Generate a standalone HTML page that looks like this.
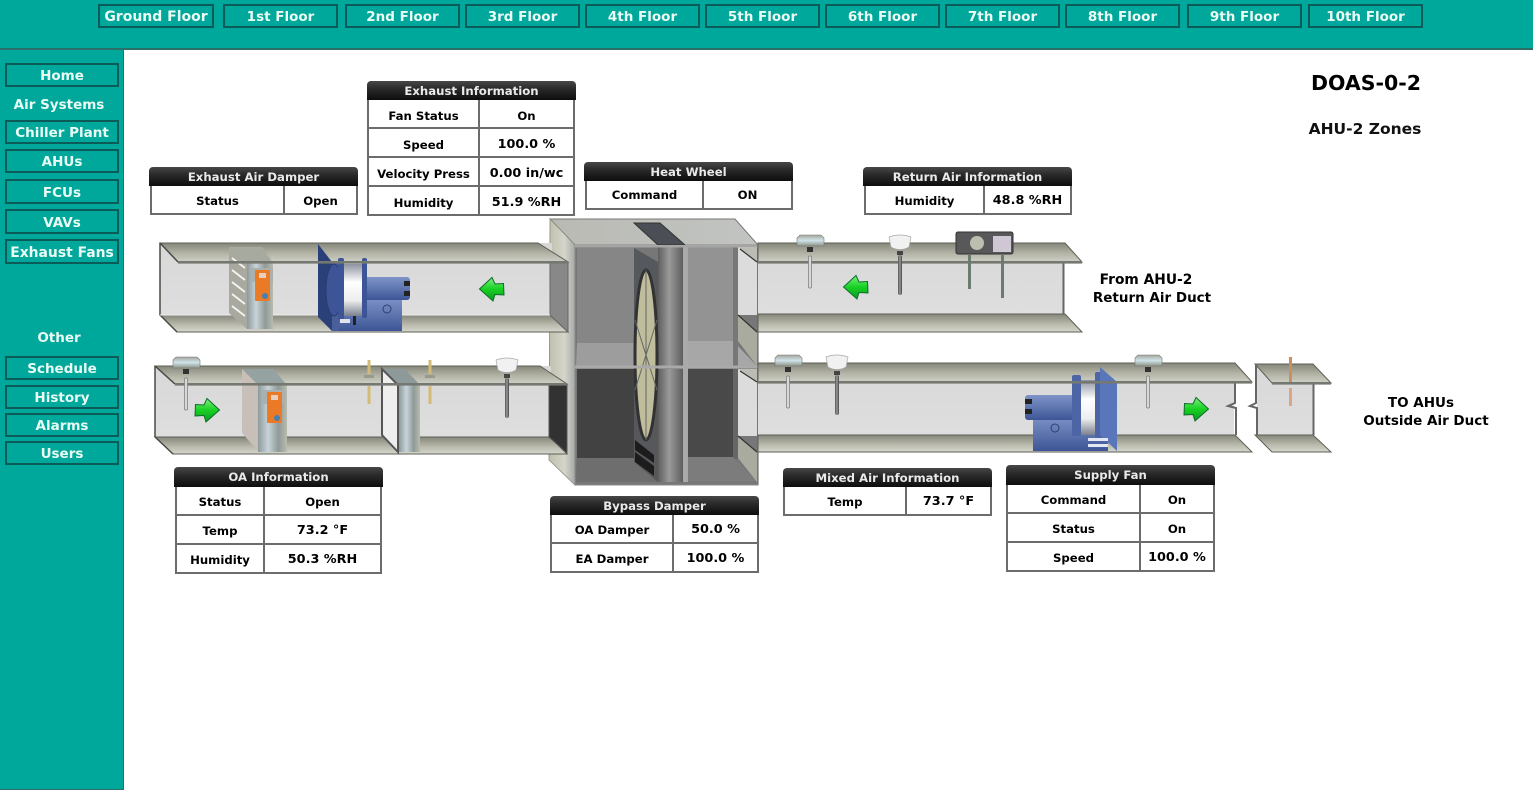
<!DOCTYPE html>
<html lang="en"><head><meta charset="utf-8"><title>DOAS-0-2</title>
<style>
html,body{margin:0;padding:0;background:#fff;width:1533px;height:791px;overflow:hidden}
body{position:relative;font-family:"DejaVu Sans",Verdana,sans-serif;font-weight:bold;color:#000}
#top{position:absolute;left:0;top:0;width:1533px;height:48px;background:#00a89b;border-bottom:2px solid #2c6f69}
#side{position:absolute;left:0;top:50px;width:123px;height:739px;background:#00a89b;border-right:1px solid #2c6f69;border-bottom:1px solid #2c6f69}
.b{position:absolute;box-sizing:border-box;border:2px solid #0b5c58;color:#eafbf4;display:flex;align-items:center;justify-content:center;font-size:13.5px;height:24px;padding-top:2px;white-space:nowrap;filter:blur(.25px)}
.s{left:5px;width:114px}
.l{position:absolute;color:#eafbf4;font-size:13.5px;white-space:nowrap;text-align:center;filter:blur(.25px)}
.t{position:absolute;width:209px;font-size:11.7px}
.t .h{height:19px;background:linear-gradient(#474747,#2a2a2a 40%,#0d0d0d);border-radius:4px 4px 0 0;color:#e9e9e9;text-align:center;line-height:20px;font-size:11.7px;white-space:nowrap}
.t .r{box-sizing:border-box;display:flex;height:29px;border:solid #6c6c6c;border-width:0 2px 2px 2px;background:#fff}
.t .r div{display:flex;align-items:center;justify-content:center;white-space:nowrap;padding-top:2px;box-sizing:border-box;filter:blur(.2px)}
.t .r div:first-child{border-right:2px solid #6c6c6c}
.t .r div:last-child{flex:1}
.t .r .n{font-size:12.8px}
.t.a .r{margin-left:1px}
.t.e .r{margin-right:1px}
.t.e .r div{padding-top:4px}
.t.e .r div:first-child{}
.t.o .r{margin:0 1px 0 1px}
.t.u .r div{padding-top:0}
.x{position:absolute;color:#000;white-space:nowrap;text-align:center;filter:blur(.2px)}
svg{position:absolute;left:0;top:0}
</style></head><body>
<div id="top"></div><div id="side"></div>
<div class="b" style="left:98px;top:4px;width:116px;font-size:14px">Ground Floor</div>
<div class="b" style="left:223px;top:4px;width:115px">1st Floor</div>
<div class="b" style="left:345px;top:4px;width:115px">2nd Floor</div>
<div class="b" style="left:465px;top:4px;width:115px">3rd Floor</div>
<div class="b" style="left:585px;top:4px;width:115px">4th Floor</div>
<div class="b" style="left:705px;top:4px;width:115px">5th Floor</div>
<div class="b" style="left:825px;top:4px;width:115px">6th Floor</div>
<div class="b" style="left:945px;top:4px;width:115px">7th Floor</div>
<div class="b" style="left:1065px;top:4px;width:115px">8th Floor</div>
<div class="b" style="left:1187px;top:4px;width:115px">9th Floor</div>
<div class="b" style="left:1308px;top:4px;width:115px">10th Floor</div>

<div class="b s" style="top:63px">Home</div>
<div class="l" style="left:0;width:118px;top:97px">Air Systems</div>
<div class="b s" style="top:120px">Chiller Plant</div>
<div class="b s" style="top:149px">AHUs</div>
<div class="b s" style="top:179px;height:25px">FCUs</div>
<div class="b s" style="top:209px;height:25px">VAVs</div>
<div class="b s" style="top:239px;height:25px;font-size:13.9px">Exhaust Fans</div>
<div class="l" style="left:0;width:118px;top:330px">Other</div>
<div class="b s" style="top:356px">Schedule</div>
<div class="b s" style="top:385px">History</div>
<div class="b s" style="top:413px">Alarms</div>
<div class="b s" style="top:441px">Users</div>

<svg width="1533" height="791" viewBox="0 0 1533 791">
<defs>
<linearGradient id="band" x1="0" y1="0" x2="0" y2="1"><stop offset="0" stop-color="#85877a"/><stop offset=".55" stop-color="#b3b4a6"/><stop offset="1" stop-color="#cfd0c6"/></linearGradient>
<linearGradient id="bandb" x1="0" y1="0" x2="0" y2="1"><stop offset="0" stop-color="#85877a"/><stop offset=".6" stop-color="#bbbcae"/><stop offset="1" stop-color="#d5d6cd"/></linearGradient>
<linearGradient id="body" x1="0" y1="0" x2="0" y2="1"><stop offset="0" stop-color="#d8d8d8"/><stop offset="1" stop-color="#dedede"/></linearGradient>
<linearGradient id="grn" x1="0" y1="0" x2="0" y2="1"><stop offset="0" stop-color="#7df07a"/><stop offset=".5" stop-color="#16d024"/><stop offset="1" stop-color="#0a9a20"/></linearGradient>
<linearGradient id="metal" x1="0" y1="0" x2="1" y2="0"><stop offset="0" stop-color="#8d9a9c"/><stop offset=".35" stop-color="#c8d4d8"/><stop offset=".7" stop-color="#8f9a98"/><stop offset="1" stop-color="#b8bcae"/></linearGradient>
<linearGradient id="sideg" x1="0" y1="0" x2="1" y2="0"><stop offset="0" stop-color="#bfc0ac"/><stop offset=".6" stop-color="#d5d5cb"/><stop offset="1" stop-color="#a5a8a6"/></linearGradient>
<linearGradient id="roof" x1="0" y1="0" x2="1" y2="0"><stop offset="0" stop-color="#b9bab3"/><stop offset="1" stop-color="#c2c4c2"/></linearGradient>
<linearGradient id="blue" x1="0" y1="0" x2="0" y2="1"><stop offset="0" stop-color="#7e93c8"/><stop offset=".5" stop-color="#5f76b0"/><stop offset="1" stop-color="#3d5596"/></linearGradient>
<linearGradient id="drum" x1="0" y1="0" x2="0" y2="1"><stop offset="0" stop-color="#8d93a0"/><stop offset=".35" stop-color="#fff"/><stop offset=".7" stop-color="#eee"/><stop offset="1" stop-color="#7a8090"/></linearGradient>
<linearGradient id="col" x1="0" y1="0" x2="1" y2="0"><stop offset="0" stop-color="#5e5e5e"/><stop offset=".45" stop-color="#9a9a9a"/><stop offset="1" stop-color="#5e5e5e"/></linearGradient>
<linearGradient id="rod" x1="0" y1="0" x2="1" y2="0"><stop offset="0" stop-color="#555"/><stop offset=".5" stop-color="#999"/><stop offset="1" stop-color="#444"/></linearGradient>
<linearGradient id="boxs" x1="0" y1="0" x2="0" y2="1"><stop offset="0" stop-color="#a5a69c"/><stop offset=".5" stop-color="#cfe4ea"/><stop offset="1" stop-color="#8e9488"/></linearGradient>
<filter id="sf" x="-2%" y="-2%" width="104%" height="104%"><feGaussianBlur stdDeviation=".35"/></filter>
<g id="arrowL"><path d="M0.5 12L13 .5L16 7L24.5 6.5L25 18L16 17.5L14 24Z" fill="url(#grn)" stroke="#0b6d2a" stroke-width="1"/></g>
<g id="arrowR"><path d="M24.5 12L12 .5L9 7L.5 6.5L0 18L9 17.5L11 24Z" fill="url(#grn)" stroke="#0b6d2a" stroke-width="1"/></g>
<g id="sa"><path d="M0 3L3 0L24 0L27 3L27 11L0 11Z" fill="url(#boxs)" stroke="#777" stroke-width=".6"/><rect x="10" y="12" width="6" height="5" fill="#333"/><rect x="11.5" y="21" width="3" height="32" rx="1" fill="#d8d8d8" stroke="#777" stroke-width=".7"/></g>
<g id="sb"><path d="M0 2Q11 -2 22 2L20 12Q11 17 2 12Z" fill="#f1f1f1" stroke="#aaa" stroke-width=".7"/><rect x="8" y="16" width="6" height="4" fill="#444"/><rect x="9" y="20" width="4" height="40" rx="2" fill="url(#rod)"/></g>
<g id="tan"><rect x="-1.5" y="0" width="3" height="14" fill="#d4bb74"/><rect x="-5" y="15" width="10" height="3" fill="#9a9a8c"/><rect x="-1.5" y="26" width="3" height="18" fill="#d4bb74"/></g>
<g id="act"><rect x="-4" y="-2" width="22" height="14" fill="#aab0ad"/><rect x="0" y="0" width="15" height="31" rx="1" fill="#ea7a26"/><rect x="4" y="3" width="7" height="5" fill="#e8d0c0"/><circle cx="10" cy="26" r="3" fill="#4a7fb0"/></g>
</defs>

<g filter="url(#sf)">
<path d="M550 219H735L758 245H575Z" fill="url(#roof)" stroke="#777" stroke-width="1"/>
<path d="M550 219L575 245V485L549 460Z" fill="url(#sideg)" stroke="#8a8a80" stroke-width=".8"/>
<rect x="575" y="245" width="183" height="240" fill="#777" stroke="#888"/>
<rect x="577" y="248" width="57" height="96" fill="#868686"/>
<path d="M577 343H634L657 366H576Z" fill="#9d9d9d"/>
<rect x="687" y="247" width="46" height="96" fill="#939393"/>
<path d="M687 341H733L757 366H687Z" fill="#a7a7a7"/>
<rect x="733" y="247" width="5" height="119" fill="#777"/>
<rect x="577" y="369" width="57" height="90" fill="#434343"/>
<path d="M577 458H634L659 482H576Z" fill="#6e6e6e"/>
<rect x="688" y="369" width="46" height="88" fill="#4a4a4a"/>
<rect x="733" y="369" width="5" height="90" fill="#666"/>
<path d="M688 457H733L756 481H688Z" fill="#7b7b7b"/>
<path d="M634 223H660L685 245H658Z" fill="#4b4f55" stroke="#333"/>
<path d="M634 248L658 262V366H634Z" fill="#55585c"/>
<path d="M634 369H658V482L634 462Z" fill="#56585c"/>
<rect x="658" y="247" width="25" height="119" fill="url(#col)"/>
<rect x="658" y="369" width="25" height="113" fill="url(#col)"/>
<rect x="683" y="247" width="5" height="235" fill="#aaa"/>
<path d="M635 440L654 455V463L635 450ZM635 452L654 466V476L635 462Z" fill="#1e1e1e"/>
<ellipse cx="646" cy="355" rx="11" ry="85" fill="#bfbd9c" stroke="#333" stroke-width="3"/>
<path d="M646 270V440M635 320L657 390M657 320L635 390" stroke="#666" stroke-width="1"/>
<rect x="575" y="365.5" width="183" height="3" fill="#aaa"/>
<rect x="575" y="245" width="183" height="2.5" fill="#a5a5a5"/>
<path d="M738 247H757V315H738Z" fill="#dcdcdc"/>
<path d="M738 247L757 262V247Z" fill="#bcbcb4"/>
<path d="M738 315L757 332V366L738 341Z" fill="#a9ab9f"/>
<path d="M738 369H757V436H738Z" fill="#dcdcdc"/>
<path d="M738 369L757 382V369Z" fill="#bcbcb4"/>
<path d="M738 436L757 452V482L738 458Z" fill="#a9ab9f"/>
<path d="M740 249L757 262M738 315L757 332M740 371L757 382M738 436L757 452" stroke="#333" stroke-width="1.2"/>
<path d="M758 245V485" stroke="#777" stroke-width="1.2"/>

<rect x="160" y="243" width="392" height="72" fill="url(#body)"/>
<path d="M160 243H538L568 262H178Z" fill="url(#band)" stroke="#5d5f57" stroke-width="1"/>
<path d="M160 315H550L568 332H177Z" fill="url(#bandb)" stroke="#5d5f57" stroke-width="1"/>
<path d="M160 243L178 262M160 315L177 332M160 243V315" stroke="#4a4c45" stroke-width="1.5" fill="none"/>
<path d="M550 263H568V332L550 315Z" fill="#888" stroke="#666"/>
<path d="M160 315H550" stroke="#eee" stroke-width="1"/>

<rect x="155" y="366" width="396" height="71" fill="url(#body)"/>
<path d="M155 366H540L567 384H175Z" fill="url(#band)" stroke="#5d5f57" stroke-width="1"/>
<path d="M155 437H550L567 454H173Z" fill="url(#bandb)" stroke="#5d5f57" stroke-width="1"/>
<path d="M155 366L175 384M155 437L173 454M155 366V437" stroke="#4a4c45" stroke-width="1.5" fill="none"/>
<path d="M549 385H567V453L549 437Z" fill="#333" stroke="#555"/>

<rect x="758" y="243" width="306" height="71" fill="url(#body)"/>
<path d="M758 243H1065L1082 262H758Z" fill="url(#band)" stroke="#5d5f57" stroke-width="1"/>
<path d="M758 314H1065L1082 332H758Z" fill="url(#bandb)" stroke="#5d5f57" stroke-width="1"/>
<path d="M1063.5 262V314" stroke="#666" stroke-width="2"/>

<rect x="758" y="363" width="476" height="72" fill="url(#body)"/>
<path d="M758 363H1235L1252 382H758Z" fill="url(#band)" stroke="#5d5f57" stroke-width="1"/>
<path d="M758 435H1235L1252 452H758Z" fill="url(#bandb)" stroke="#5d5f57" stroke-width="1"/>
<path d="M1235 383V403L1228 406L1236 408V435" stroke="#666" stroke-width="2" fill="none"/>

<rect x="1257" y="364" width="57" height="71" fill="url(#body)"/>
<path d="M1255 364H1313L1331 383H1272Z" fill="url(#band)" stroke="#5d5f57" stroke-width="1"/>
<path d="M1255 435H1313L1331 452H1272Z" fill="url(#bandb)" stroke="#5d5f57" stroke-width="1"/>
<path d="M1256 364V403L1250 406L1257 408V435" stroke="#666" stroke-width="2" fill="none"/>
<path d="M1313.5 383V435" stroke="#666" stroke-width="2"/>
<rect x="1289" y="357" width="3" height="25" fill="#c88f62"/><rect x="1289" y="388" width="3" height="18" fill="#dca585"/>

<path d="M229 247H262L273 263H247Z" fill="#a7ab9f"/>
<path d="M229 247L247 263V329L229 313Z" fill="#a9a9a0"/>
<path d="M232 258L245 268M232 270L245 280M232 282L245 292M232 294L245 304M232 306L245 316" stroke="#f4f4f4" stroke-width="1.8"/>
<rect x="247" y="263" width="26" height="66" fill="url(#metal)"/>
<use href="#act" x="255" y="270"/>
<path d="M242 369H273L287 385H258Z" fill="#95a2a2"/>
<path d="M242 369L258 385V451L242 433Z" fill="#c8c0b8"/>
<rect x="258" y="385" width="29" height="67" fill="url(#metal)"/>
<use href="#act" x="267" y="392"/>
<path d="M382 369H405L420 385H398Z" fill="#8e9a9a"/>
<path d="M382 369L398 385V452L382 435Z" fill="#eee" stroke="#555" stroke-width="2"/>
<rect x="399" y="385" width="21" height="67" fill="url(#metal)"/>

<path d="M318 244L332 262V331L318 317Z" fill="#2c3f78"/>
<rect x="332" y="262" width="10" height="69" fill="#4a5f9c"/>
<ellipse cx="334" cy="290" rx="8" ry="26" fill="#3e5596" stroke="#2a3a70"/>
<rect x="339" y="297" width="63" height="34" fill="url(#blue)"/>
<rect x="364" y="277" width="46" height="23" rx="3" fill="url(#blue)"/>
<rect x="404" y="281" width="6" height="5" fill="#222"/><rect x="404" y="291" width="6" height="5" fill="#222"/>
<rect x="344" y="264" width="19" height="52" fill="url(#drum)"/>
<rect x="338" y="258" width="6" height="62" rx="2" fill="#3d5596"/><rect x="362" y="258" width="5" height="60" rx="2" fill="#3d5596"/>
<rect x="340" y="319" width="10" height="4" fill="#dfe4f0"/><rect x="353" y="316" width="3" height="9" fill="#222"/>
<circle cx="387" cy="309" r="4" fill="none" stroke="#2d3f70"/>

<rect x="1033" y="415" width="75" height="36" fill="url(#blue)"/>
<rect x="1025" y="395" width="56" height="25" rx="3" fill="url(#blue)"/>
<rect x="1025" y="399" width="7" height="5" fill="#222"/><rect x="1025" y="409" width="7" height="5" fill="#222"/>
<rect x="1080" y="380" width="16" height="55" fill="url(#drum)"/>
<rect x="1072" y="375" width="9" height="61" rx="2" fill="#4d65a5"/>
<rect x="1095" y="372" width="9" height="68" rx="2" fill="#4d65a5"/>
<path d="M1100 367L1117 382V451L1100 435Z" fill="#5a76ba"/>
<rect x="1088" y="438" width="20" height="3" fill="#e4e8f2"/><rect x="1088" y="444" width="20" height="3" fill="#e4e8f2"/>
<circle cx="1055" cy="428" r="4" fill="none" stroke="#2d3f70"/>

<rect x="178" y="261" width="390" height="2.6" fill="#747771"/>
<rect x="175" y="383" width="392" height="2.6" fill="#747771"/>
<rect x="758" y="261" width="324" height="2.6" fill="#747771"/>
<rect x="758" y="381" width="494" height="2.6" fill="#747771"/>
<rect x="1272" y="382" width="59" height="2.6" fill="#747771"/>

<use href="#sa" x="173" y="357"/><use href="#sa" x="797" y="235"/><use href="#sa" x="775" y="355"/><use href="#sa" x="1135" y="355"/>
<use href="#sb" x="496" y="358"/><use href="#sb" x="889" y="235"/><use href="#sb" x="826" y="355"/>
<use href="#tan" x="369" y="360"/><use href="#tan" x="430" y="360"/>
<rect x="956" y="232" width="57" height="22" rx="2" fill="#58585a" stroke="#333"/><circle cx="977" cy="243" r="7" fill="#bdbdb0"/><rect x="993" y="236" width="18" height="16" fill="#cfc7d3"/>
<rect x="968" y="254" width="3" height="35" fill="#6c7a70"/><rect x="1001" y="254" width="3" height="44" fill="#6c7a70"/>

<use href="#arrowL" x="479" y="277"/><use href="#arrowL" x="843" y="275"/>
<use href="#arrowR" x="195" y="398"/><use href="#arrowR" x="1184" y="397"/>
</g>
</svg>

<div class="x" style="left:1266px;width:200px;top:71px;font-size:20.5px">DOAS-0-2</div>
<div class="x" style="left:1265px;width:200px;top:120px;font-size:15.5px;color:#111">AHU-2 Zones</div>
<div class="x" style="left:1046px;width:200px;top:272px;font-size:13.8px">From AHU-2</div>
<div class="x" style="left:1052px;width:200px;top:290px;font-size:13.5px">Return Air Duct</div>
<div class="x" style="left:1321px;width:200px;top:395px;font-size:13.5px">TO AHUs</div>
<div class="x" style="left:1326px;width:200px;top:413px;font-size:13.5px">Outside Air Duct</div>

<div class="t a" style="left:149px;top:167px"><div class="h">Exhaust Air Damper</div>
<div class="r"><div style="width:133px">Status</div><div>Open</div></div></div>

<div class="t e" style="left:367px;top:81px"><div class="h">Exhaust Information</div>
<div class="r"><div style="width:111px">Fan Status</div><div>On</div></div>
<div class="r"><div style="width:111px">Speed</div><div class="n">100.0 %</div></div>
<div class="r"><div style="width:111px">Velocity Press</div><div class="n">0.00 in/wc</div></div>
<div class="r"><div style="width:111px">Humidity</div><div class="n">51.9 %RH</div></div></div>

<div class="t a u" style="left:584px;top:162px"><div class="h">Heat Wheel</div>
<div class="r"><div style="width:117px">Command</div><div>ON</div></div></div>

<div class="t a" style="left:863px;top:167px"><div class="h">Return Air Information</div>
<div class="r"><div style="width:119px">Humidity</div><div class="n">48.8 %RH</div></div></div>

<div class="t o" style="left:174px;top:467px"><div class="h" style="height:20px">OA Information</div>
<div class="r"><div style="width:88px">Status</div><div>Open</div></div>
<div class="r"><div style="width:88px">Temp</div><div class="n">73.2 °F</div></div>
<div class="r"><div style="width:88px">Humidity</div><div class="n">50.3 %RH</div></div></div>

<div class="t" style="left:550px;top:496px"><div class="h">Bypass Damper</div>
<div class="r"><div style="width:122px">OA Damper</div><div class="n">50.0 %</div></div>
<div class="r"><div style="width:122px">EA Damper</div><div class="n">100.0 %</div></div></div>

<div class="t" style="left:783px;top:468px"><div class="h">Mixed Air Information</div>
<div class="r"><div style="width:122px">Temp</div><div class="n">73.7 °F</div></div></div>

<div class="t" style="left:1006px;top:465px"><div class="h" style="height:20px">Supply Fan</div>
<div class="r"><div style="width:133px">Command</div><div>On</div></div>
<div class="r"><div style="width:133px">Status</div><div>On</div></div>
<div class="r"><div style="width:133px">Speed</div><div class="n">100.0 %</div></div></div>
</body></html>
